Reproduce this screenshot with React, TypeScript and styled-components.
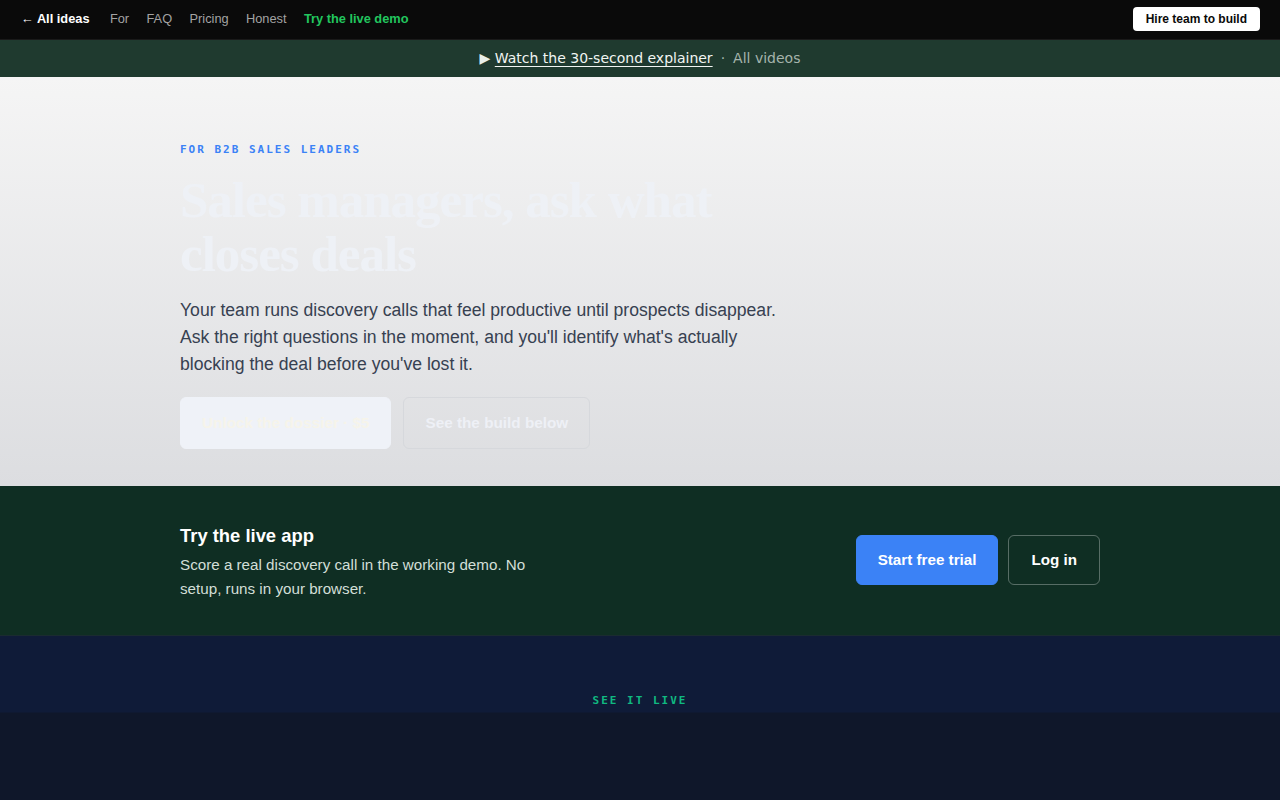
import styled, { createGlobalStyle } from "styled-components"

const Global = createGlobalStyle`
  html, body {
    margin: 0;
    padding: 0;
    background: #0f172a;
    font-family: "Liberation Sans", Arial, sans-serif;
  }
  * { box-sizing: border-box; }
`

const Nav = styled.nav`
  height: 40px;
  background: #0a0a0a;
  border-bottom: 1px solid #1a1a1a;
  display: flex;
  align-items: center;
  padding: 0 20px 2px 21px;
`

const NavLinks = styled.div`
  display: flex;
  align-items: center;
  gap: 17.4px;
  font-size: 12.8px;
`

const NavLink = styled.a<{ $tone?: "home" | "accent" }>`
  color: ${(p) => (p.$tone === "home" ? "#ffffff" : p.$tone === "accent" ? "#22c55e" : "#a3a3a3")};
  font-weight: ${(p) => (p.$tone ? 700 : 400)};
  text-decoration: none;
  margin-right: ${(p) => (p.$tone === "home" ? "3px" : "0")};
`

const HireButton = styled.a`
  margin-left: auto;
  background: #ffffff;
  color: #0a0a0a;
  font-size: 12px;
  font-weight: 700;
  padding: 6px 13px;
  border-radius: 4px;
  line-height: 12px;
`

const Banner = styled.div`
  height: 37px;
  background: #1f3a2f;
  display: flex;
  align-items: center;
  justify-content: center;
  gap: 8px;
  padding-bottom: 2px;
  font-family: "DejaVu Sans", sans-serif;
  font-size: 14px;
  color: #e8efe9;
`

const BannerLink = styled.a`
  color: #f1f5f2;
  text-decoration: underline;
  text-underline-offset: 3px;
`

const Muted = styled.span`
  color: #a5b4ac;
`

const Hero = styled.section`
  background: linear-gradient(180deg, #f5f5f5 0%, #dcdde0 100%);
  padding: 66px 180px 37px;
  height: 409px;
`

const Eyebrow = styled.div<{ $color: string }>`
  font-family: "DejaVu Sans Mono", "Liberation Mono", monospace;
  font-size: 11px;
  font-weight: 700;
  letter-spacing: 2px;
  color: ${(p) => p.$color};
  text-transform: uppercase;
`

const Heading = styled.h1`
  margin: 17px 0 0;
  font-family: "Liberation Serif", "Times New Roman", serif;
  font-weight: 700;
  font-size: 51px;
  line-height: 54px;
  letter-spacing: -1px;
  color: #eef1f6;
  max-width: 600px;
`

const Lead = styled.p`
  margin: 16px 0 0;
  font-size: 17.6px;
  line-height: 27px;
  color: #374151;
  max-width: 610px;
`

const HeroActions = styled.div`
  display: flex;
  gap: 12px;
  margin-top: 19px;
`

const GhostButton = styled.a<{ $filled?: boolean }>`
  display: flex;
  align-items: center;
  height: 52px;
  padding: 0 21px;
  border-radius: 6px;
  font-size: 15.3px;
  font-weight: 700;
  background: ${(p) => (p.$filled ? "#eff2f8" : "transparent")};
  border: 1px solid ${(p) => (p.$filled ? "#eff2f8" : "#d6d8dc")};
  color: ${(p) => (p.$filled ? "#f6f4ea" : "#eef0f6")};
`

const LiveApp = styled.section`
  height: 150px;
  background: #0f2e23;
  border-bottom: 1px solid #1a2b30;
  display: flex;
  align-items: center;
  justify-content: space-between;
  padding: 0 180px 2px;
`

const LiveText = styled.div`
  max-width: 360px;
  padding-top: 6px;
`

const LiveTitle = styled.h2`
  margin: 0;
  font-size: 18.4px;
  font-weight: 700;
  color: #ffffff;
`

const LiveBody = styled.p`
  margin: 6px 0 0;
  font-size: 15.2px;
  line-height: 24px;
  color: #d2dfd7;
`

const LiveActions = styled.div`
  display: flex;
  gap: 10px;
`

const ActionButton = styled.a<{ $primary?: boolean }>`
  display: flex;
  align-items: center;
  justify-content: center;
  height: 50px;
  padding: 0 ${(p) => (p.$primary ? "21px" : "22px")};
  border-radius: 6px;
  font-size: 15.2px;
  font-weight: 700;
  color: #ffffff;
  background: ${(p) => (p.$primary ? "#3b82f6" : "transparent")};
  border: 1px solid ${(p) => (p.$primary ? "#3b82f6" : "rgba(255,255,255,0.3)")};
`

const Demo = styled.section`
  background: linear-gradient(180deg, #0f1b38 0px, #0f1b38 76px, #0f172a 77px);
  min-height: 200px;
  padding-top: 58px;
  display: flex;
  justify-content: center;
`

export default function App() {
  return (
    <>
      <Global />
      <Nav>
        <NavLinks>
          <NavLink $tone="home">← All ideas</NavLink>
          <NavLink>For</NavLink>
          <NavLink>FAQ</NavLink>
          <NavLink>Pricing</NavLink>
          <NavLink>Honest</NavLink>
          <NavLink $tone="accent">Try the live demo</NavLink>
        </NavLinks>
        <HireButton>Hire team to build</HireButton>
      </Nav>

      <Banner>
        <span>▶ <BannerLink>Watch the 30-second explainer</BannerLink></span>
        <Muted>·</Muted>
        <Muted>All videos</Muted>
      </Banner>

      <Hero>
        <Eyebrow $color="#3b82f6">For B2B sales leaders</Eyebrow>
        <Heading>Sales managers, ask what closes deals</Heading>
        <Lead>
          Your team runs discovery calls that feel productive until prospects disappear. Ask the right
          questions in the moment, and you'll identify what's actually blocking the deal before you've lost it.
        </Lead>
        <HeroActions>
          <GhostButton $filled>Unlock the dossier · $5</GhostButton>
          <GhostButton>See the build below</GhostButton>
        </HeroActions>
      </Hero>

      <LiveApp>
        <LiveText>
          <LiveTitle>Try the live app</LiveTitle>
          <LiveBody>Score a real discovery call in the working demo. No setup, runs in your browser.</LiveBody>
        </LiveText>
        <LiveActions>
          <ActionButton $primary>Start free trial</ActionButton>
          <ActionButton>Log in</ActionButton>
        </LiveActions>
      </LiveApp>

      <Demo>
        <Eyebrow $color="#10b981">See it live</Eyebrow>
      </Demo>
    </>
  )
}
